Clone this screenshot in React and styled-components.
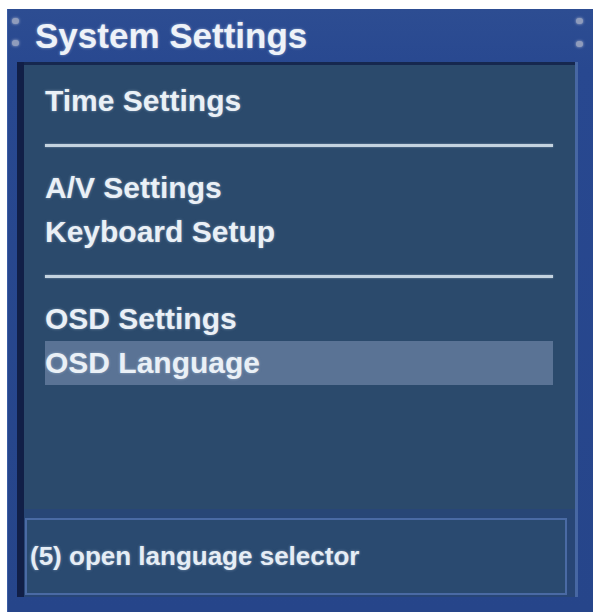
import React from 'react';
import styled, { createGlobalStyle } from 'styled-components';

const GlobalStyle = createGlobalStyle`
  html, body {
    margin: 0;
    padding: 0;
    background: #ffffff;
  }
  body {
    font-family: "Liberation Sans", Arial, sans-serif;
  }
`;

const Window = styled.div`
  position: relative;
  box-sizing: border-box;
  margin: 9px 0 0 7px;
  width: 586px;
  height: 603px;
  padding: 0 15px 15px 10px;
  display: flex;
  flex-direction: column;
  background: linear-gradient(180deg, #2d4d92 0%, #284890 10%, #26458a 100%);
  box-shadow: inset 1px 0 0 #3a5ca4;
`;

const TitleBar = styled.div`
  height: 53px;
  display: flex;
  align-items: center;
  padding-left: 18px;
  color: #eef2f8;
  font-size: 35px;
  font-weight: 700;
  text-shadow: 0 0 3px rgba(210, 225, 245, 0.55);
`;

const Rivet = styled.span`
  position: absolute;
  width: 7px;
  height: 6px;
  border-radius: 3px;
  background: #8f9cbc;
  box-shadow: 0 0 3px #aab4d0;
  left: ${p => (p.right ? 'auto' : '5px')};
  right: ${p => (p.right ? '10px' : 'auto')};
  top: ${p => p.top}px;
`;

const Body = styled.div`
  flex: 1;
  display: flex;
  flex-direction: column;
  border-left: 7px solid #111f47;
  border-right: 3px solid #4767a3;
`;

const Panel = styled.div`
  height: 447px;
  box-sizing: border-box;
  border-top: 3px solid #16284f;
  background: #2b4a6c;
  padding: 14px 22px 0 21px;
  display: flex;
  flex-direction: column;
`;

const Item = styled.div`
  height: 44px;
  line-height: 44px;
  font-size: 30px;
  font-weight: 700;
  color: #eaf0f6;
  text-shadow: 0 0 3px rgba(200, 220, 240, 0.5);
  white-space: nowrap;
  background: ${p => (p.selected ? '#5a7395' : 'transparent')};
`;

const Separator = styled.div`
  height: 3px;
  margin: 21px 0 19px;
  background: #c4d3e0;
  box-shadow: 0 0 2px rgba(196, 211, 224, 0.6);
`;

const Footer = styled.div`
  flex: 1;
  background: #284676;
  padding: 9px 8px 2px 1px;
  display: flex;
  flex-direction: column;
`;

const StatusBox = styled.div`
  flex: 1;
  box-sizing: border-box;
  border: 2px solid #4a6aa4;
  background: #2a4a70;
  display: flex;
  align-items: center;
  padding: 0 0 0 3px;
  color: #e6edf5;
  font-size: 26px;
  font-weight: 700;
  text-shadow: 0 0 3px rgba(200, 220, 240, 0.5);
`;

const groups = [
  ['Time Settings'],
  ['A/V Settings', 'Keyboard Setup'],
  ['OSD Settings', 'OSD Language'],
];

export default function App() {
  const selected = 'OSD Language';
  return (
    <>
      <GlobalStyle />
      <Window>
        <Rivet top={9} />
        <Rivet top={31} />
        <Rivet right top={9} />
        <Rivet right top={32} />
        <TitleBar>System Settings</TitleBar>
        <Body>
          <Panel>
            {groups.map((group, i) => (
              <React.Fragment key={i}>
                {i > 0 && <Separator />}
                {group.map(label => (
                  <Item key={label} selected={label === selected}>
                    {label}
                  </Item>
                ))}
              </React.Fragment>
            ))}
          </Panel>
          <Footer>
            <StatusBox>(5) open language selector</StatusBox>
          </Footer>
        </Body>
      </Window>
    </>
  );
}
